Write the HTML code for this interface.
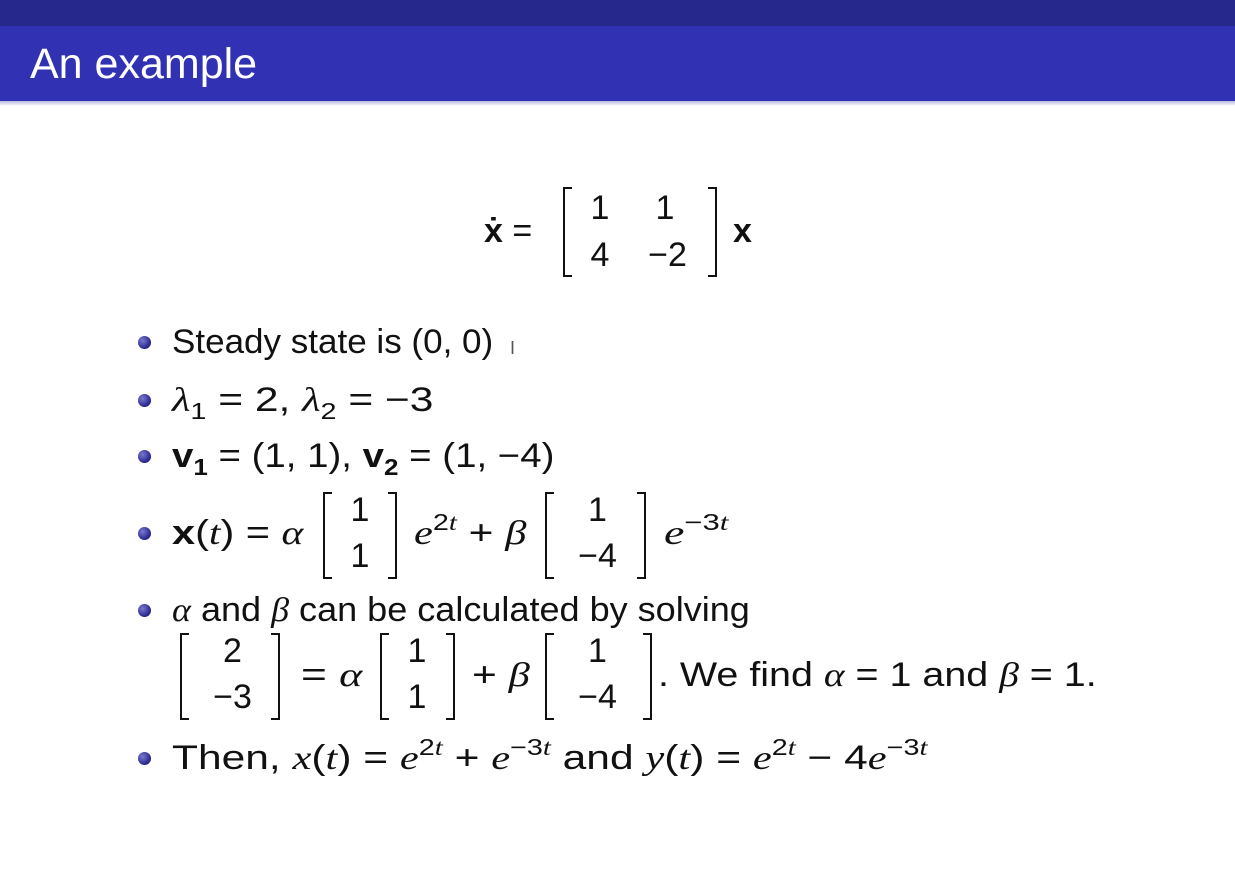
<!DOCTYPE html>
<html><head><meta charset="utf-8"><style>
body{margin:0;width:1235px;height:871px;background:#fff;position:relative;overflow:hidden;font-family:"Liberation Sans",sans-serif;color:#111;}
.top{position:absolute;left:0;top:0;width:1235px;height:26px;background:#26288c;}
.hdr{position:absolute;left:0;top:26px;width:1235px;height:75px;background:#3131b3;}
.shadow{position:absolute;left:0;top:101px;width:1235px;height:5px;background:linear-gradient(#b8b8e0,#fff);}
.title{position:absolute;left:30px;top:38px;font-size:43px;color:#fff;line-height:52px;}
.t{position:absolute;font-size:34px;line-height:40px;white-space:nowrap;transform-origin:0 50%;}
.b{position:absolute;width:13px;height:13px;border-radius:50%;background:radial-gradient(circle at 35% 35%,#7a7ad0,#23238a 70%);}
.lb,.rb{position:absolute;border:2.5px solid #111;width:7px;}
.lb{border-right:none}.rb{border-left:none}
i{font-family:"Liberation Serif",serif;font-style:italic;}
sup{font-size:23px;vertical-align:0;position:relative;top:-14px}
sub{font-size:23px}
.c{position:absolute;font-size:34px;line-height:40px;text-align:center;}
</style></head><body>
<div class="top"></div><div class="hdr"></div><div class="shadow"></div>
<div class="title">An example</div>

<div class="t" style="left:484px;top:211px"><b>ẋ</b> =</div>
<div class="lb" style="left:563px;top:187px;height:86px"></div>
<div class="c" style="left:585px;top:188px;width:30px">1</div>
<div class="c" style="left:650px;top:188px;width:30px">1</div>
<div class="c" style="left:585px;top:235px;width:30px">4</div>
<div class="c" style="left:640px;top:235px;width:55px">−2</div>
<div class="rb" style="left:708px;top:187px;height:86px"></div>
<div class="t" style="left:733px;top:211px"><b>x</b></div>

<div class="b" style="left:138px;top:336px"></div>
<div class="t" style="left:172px;top:322px;transform:scaleX(1.03)">Steady state is (0, 0)</div>
<div class="t" style="left:510px;top:328px;font-size:18px;color:#555">I</div>
<div class="b" style="left:138px;top:394px"></div>
<div class="t" style="left:172px;top:380px;transform:scaleX(1.25)"><i>λ</i><sub>1</sub> = 2, <i>λ</i><sub>2</sub> = −3</div>
<div class="b" style="left:138px;top:450px"></div>
<div class="t" style="left:172px;top:436px;transform:scaleX(1.13)"><b>v<sub>1</sub></b> = (1, 1), <b>v<sub>2</sub></b> = (1, −4)</div>

<div class="b" style="left:138px;top:527px"></div>
<div class="t" style="left:172px;top:513px;transform:scaleX(1.22)"><b>x</b>(<i>t</i>) = <i>α</i></div>
<div class="lb" style="left:323px;top:492px;height:83px"></div>
<div class="c" style="left:345px;top:490px;width:30px">1</div>
<div class="c" style="left:345px;top:536px;width:30px">1</div>
<div class="rb" style="left:388px;top:492px;height:83px"></div>
<div class="t" style="left:414px;top:513px;transform:scaleX(1.25)"><i>e</i><sup>2<i>t</i></sup> + <i>β</i></div>
<div class="lb" style="left:545px;top:492px;height:83px"></div>
<div class="c" style="left:570px;top:490px;width:55px">1</div>
<div class="c" style="left:570px;top:536px;width:55px">−4</div>
<div class="rb" style="left:637px;top:492px;height:83px"></div>
<div class="t" style="left:664px;top:513px;transform:scaleX(1.35)"><i>e</i><sup>−3<i>t</i></sup></div>

<div class="b" style="left:138px;top:604px"></div>
<div class="t" style="left:172px;top:590px;transform:scaleX(1.06)"><i>α</i> and <i>β</i> can be calculated by solving</div>
<div class="lb" style="left:180px;top:633px;height:83px"></div>
<div class="c" style="left:205px;top:631px;width:55px">2</div>
<div class="c" style="left:205px;top:677px;width:55px">−3</div>
<div class="rb" style="left:271px;top:633px;height:83px"></div>
<div class="t" style="left:301px;top:655px;transform:scaleX(1.3)">= <i>α</i></div>
<div class="lb" style="left:380px;top:633px;height:83px"></div>
<div class="c" style="left:402px;top:631px;width:30px">1</div>
<div class="c" style="left:402px;top:677px;width:30px">1</div>
<div class="rb" style="left:446px;top:633px;height:83px"></div>
<div class="t" style="left:472px;top:655px;transform:scaleX(1.25)">+ <i>β</i></div>
<div class="lb" style="left:545px;top:633px;height:83px"></div>
<div class="c" style="left:570px;top:631px;width:55px">1</div>
<div class="c" style="left:570px;top:677px;width:55px">−4</div>
<div class="rb" style="left:643px;top:633px;height:83px"></div>
<div class="t" style="left:658px;top:655px;transform:scaleX(1.16)">. We find <i>α</i> = 1 and <i>β</i> = 1.</div>

<div class="b" style="left:138px;top:752px"></div>
<div class="t" style="left:172px;top:738px;transform:scaleX(1.25)">Then, <i>x</i>(<i>t</i>) = <i>e</i><sup>2<i>t</i></sup> + <i>e</i><sup>−3<i>t</i></sup> and <i>y</i>(<i>t</i>) = <i>e</i><sup>2<i>t</i></sup> − 4<i>e</i><sup>−3<i>t</i></sup></div>
</body></html>
